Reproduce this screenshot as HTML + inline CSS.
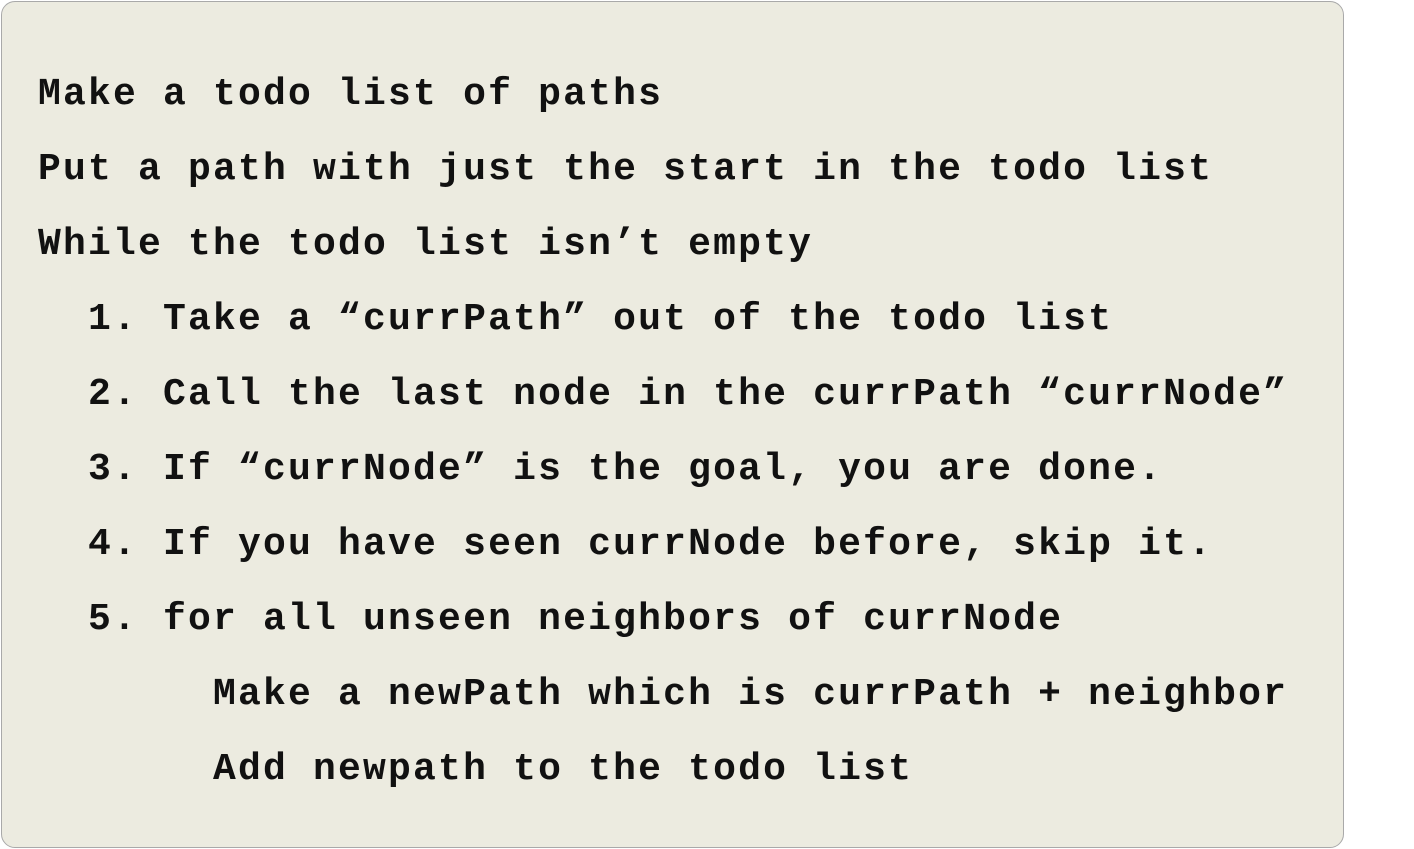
<!DOCTYPE html>
<html><head><style>
html,body{margin:0;padding:0;background:#fff;width:1414px;height:849px;overflow:hidden}
.box{position:absolute;left:1px;top:1px;width:1341px;height:845px;background:#ecebe0;border:1.5px solid #a9a9a9;border-radius:14px}
pre{position:absolute;left:38px;top:57px;margin:0;font-family:"Liberation Mono",monospace;font-weight:bold;font-size:38px;letter-spacing:2.2px;line-height:75px;color:#111}
</style></head><body>
<div class="box"></div>
<pre>Make a todo list of paths
Put a path with just the start in the todo list
While the todo list isn’t empty
  1. Take a “currPath” out of the todo list
  2. Call the last node in the currPath “currNode”
  3. If “currNode” is the goal, you are done.
  4. If you have seen currNode before, skip it.
  5. for all unseen neighbors of currNode
       Make a newPath which is currPath + neighbor
       Add newpath to the todo list</pre>
</body></html>
